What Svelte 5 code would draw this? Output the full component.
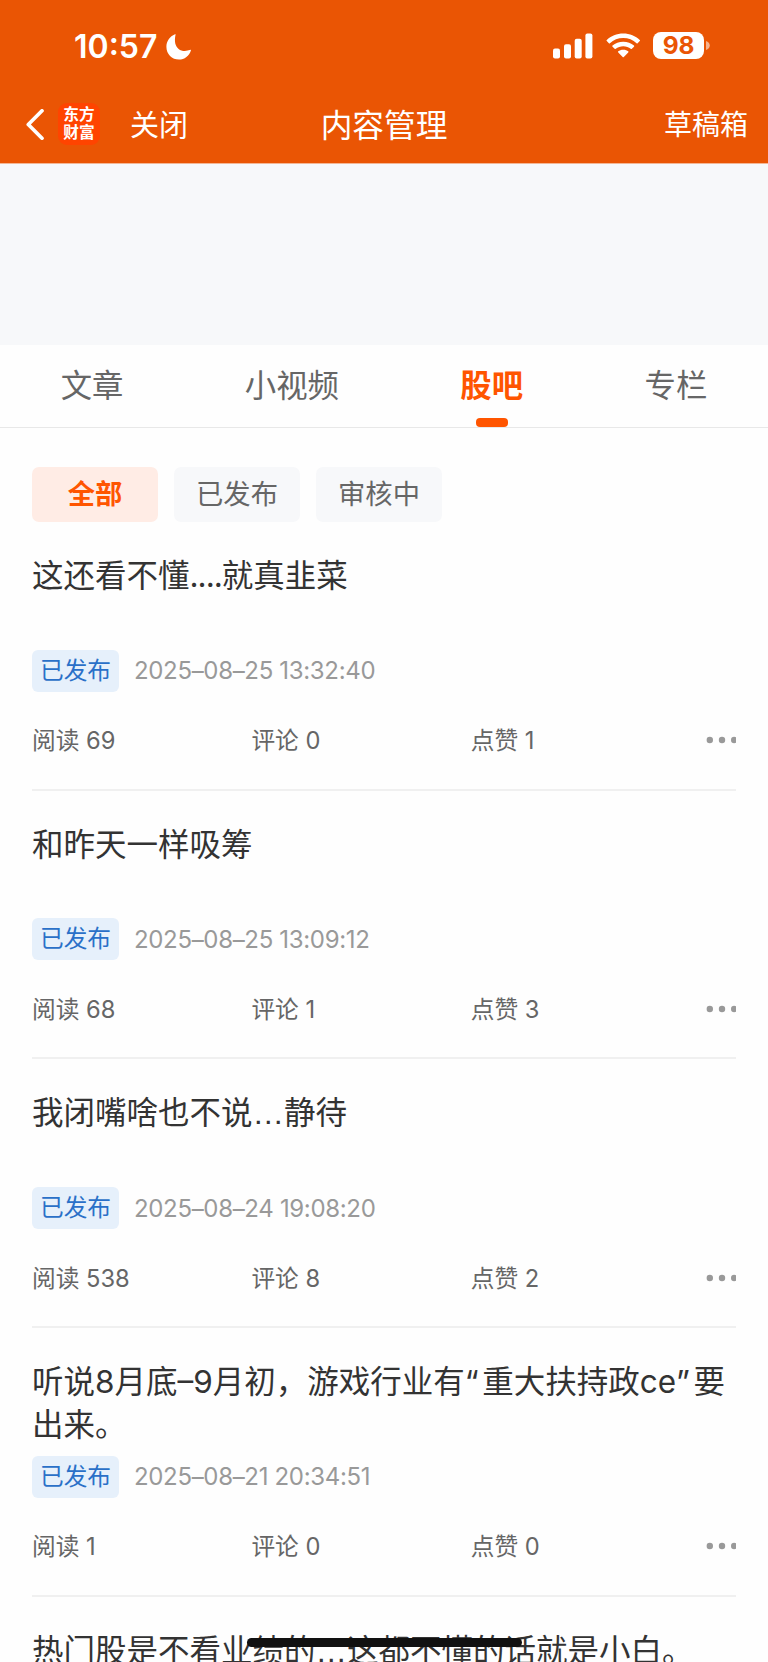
<script lang="ts">
  type Post = {
    title: string;
    time?: string;
    reads?: number;
    comments?: number;
    likes?: number;
  };

  const tabs = ['文章', '小视频', '股吧', '专栏'];
  const filters = ['全部', '已发布', '审核中'];

  const posts: Post[] = [
    { title: '这还看不懂....就真韭菜', time: '2025–08–25 13:32:40', reads: 69, comments: 0, likes: 1 },
    { title: '和昨天一样吸筹', time: '2025–08–25 13:09:12', reads: 68, comments: 1, likes: 3 },
    { title: '我闭嘴啥也不说…静待', time: '2025–08–24 19:08:20', reads: 538, comments: 8, likes: 2 },
    {
      title: '听说8月底–9月初，游戏行业有“重大扶持政ce”要出来。',
      time: '2025–08–21 20:34:51',
      reads: 1,
      comments: 0,
      likes: 0,
    },
    { title: '热门股是不看业绩的…这都不懂的话就是小白。' },
  ];

  let activeTab = $state('股吧');
  let activeFilter = $state('全部');

  // punctuation runs get their own spacing inside Chinese titles
  function splitTitle(title: string) {
    return title.split(/(“|”|…|\.{2,})/).filter(Boolean);
  }

  function partClass(part: string) {
    if (part === '…') return 'ellipsis';
    if (part === '“' || part === '”') return 'quote';
    if (part.startsWith('..')) return 'dots';
    return '';
  }
</script>

<div class="screen">
  <header class="header">
    <div class="status">
      <span class="status__time">10:57</span>
      <svg class="status__moon" viewBox="0 0 25 26" aria-hidden="true">
        <path d="M9.6.6C8 7.7 9.4 12.400 12.600 14.900C15.700 17.300 19.800 17.500 24.600 15.800C24.900 15.700 25 16 24.900 16.400C23.200 21.900 18.500 25.500 13 25.500C5.900 25.500.4 20 .4 12.900C.4 7.400 3.800 2.400 9 .3C9.400.1 9.700.2 9.600.6Z" />
      </svg>
      <span class="status__icons">
        <svg class="status__signal" viewBox="0 0 40 26" aria-hidden="true">
          <rect x="0" y="15.500" width="7" height="10" rx="2" />
          <rect x="11" y="11.300" width="7" height="14.200" rx="2" />
          <rect x="21.700" y="5.700" width="7" height="19.800" rx="2" />
          <rect x="32.400" y=".6" width="7" height="24.900" rx="2" />
        </svg>
        <svg class="status__wifi" viewBox="0 0 36 26" aria-hidden="true">
          <path d="M18 .4C24.800.4 30.900 2.900 35.200 7.200Q35.800 7.800 35.200 8.400L33 10.600Q32.500 11.100 31.900 10.600C28.200 7.100 23.300 5.200 18 5.200S7.800 7.100 4.100 10.600Q3.500 11.100 3 10.600L.8 8.400Q.2 7.800.8 7.200C5.100 2.900 11.200.4 18 .4Z" />
          <path d="M18 9C22.400 9 26.200 10.500 29.200 13.100Q29.800 13.700 29.200 14.300L27 16.500Q26.500 17 25.800 16.500C23.700 14.700 21 13.700 18 13.700S12.300 14.700 10.200 16.500Q9.500 17 9 16.500L6.800 14.300Q6.200 13.700 6.800 13.100C9.800 10.500 13.600 9 18 9Z" />
          <path d="M18 17.400C20.200 17.400 21.900 18 23.200 19.100Q23.800 19.700 23.200 20.300L18.600 24.900Q18 25.500 17.400 24.900L12.800 20.300Q12.200 19.700 12.800 19.100C14.100 18 15.800 17.400 18 17.400Z" />
        </svg>
        <span class="battery">98</span>
        <svg class="battery-cap" viewBox="0 0 4 9" aria-hidden="true">
          <path d="M0 0C2.300.8 3.800 2.500 3.800 4.500S2.300 8.200 0 9Z" />
        </svg>
      </span>
    </div>
    <nav class="nav">
      <div class="nav__left">
        <svg class="nav__back" viewBox="0 0 18 31" aria-hidden="true">
          <path d="M16 1.800 2.300 15.500 16 29.200" />
        </svg>
        <span class="logo">东方<br />财富</span>
        <span class="nav__close">关闭</span>
      </div>
      <span class="nav__title">内容管理</span>
      <span class="nav__drafts">草稿箱</span>
    </nav>
  </header>

  <div class="banner"></div>

  <div class="tabs" role="tablist">
    {#each tabs as tab}
      <button
        type="button"
        role="tab"
        class={['tab', tab === activeTab ? 'is-active' : ''].join(' ')}
        aria-selected={tab === activeTab}
        onclick={() => (activeTab = tab)}
      >
        {tab}
      </button>
    {/each}
  </div>

  <div class="filters">
    {#each filters as filter}
      <button
        type="button"
        class={['filter', filter === activeFilter ? 'is-active' : ''].join(' ')}
        onclick={() => (activeFilter = filter)}
      >
        {filter}
      </button>
    {/each}
  </div>

  <main class="posts">
    {#each posts as post}
      <article class="post">
        <h2 class="post__title">
          {#each splitTitle(post.title) as part}<span class={partClass(part)}>{part}</span>{/each}
        </h2>
        {#if post.time}
          <div class="post__meta">
            <span class="post__tag">已发布</span>
            <time class="post__time">{post.time}</time>
          </div>
          <div class="post__stats">
            <span>阅读 {post.reads}</span>
            <span>评论 {post.comments}</span>
            <span>点赞 {post.likes}</span>
            <svg class="post__more" viewBox="0 0 30 8" aria-hidden="true">
              <circle cx="3.800" cy="4" r="3.200" />
              <circle cx="16" cy="4" r="3.200" />
              <circle cx="28.200" cy="4" r="3.200" />
            </svg>
          </div>
        {/if}
      </article>
    {/each}
  </main>

  <div class="home-indicator"></div>
</div>

<style>
  :global(body) {
    margin: 0;
    background: #fefefe;
  }

  .screen {
    position: relative;
    width: 768px;
    height: 1662px;
    overflow: hidden;
    background: #fefefe;
    font-family: Inter, 'Noto Sans CJK SC', sans-serif;
    color: #333;
  }

  button {
    padding: 0;
    border: 0;
    background: none;
    font: inherit;
    cursor: pointer;
  }

  .header {
    box-sizing: border-box;
    height: 164px;
    border-bottom: 1px solid #f3b796;
    background: #ea5504;
    color: #fff;
  }

  .status {
    display: flex;
    align-items: center;
    height: 85px;
    padding: 8px 58px 0 74px;
    box-sizing: border-box;
  }

  .status__time {
    width: 83px;
    font-size: 32px;
    font-weight: 600;
    letter-spacing: 0;
    white-space: nowrap;
  }

  .status__moon {
    width: 25px;
    height: 26px;
    margin-left: 9px;
    fill: #fff;
  }

  .status__icons {
    display: flex;
    align-items: center;
    margin-left: auto;
    margin-top: -2px;
    fill: #fff;
  }

  .status__signal {
    width: 40px;
    height: 26px;
    margin-right: 12.500px;
  }

  .status__wifi {
    width: 34.500px;
    height: 25px;
    margin-right: 13px;
  }

  .battery {
    width: 51px;
    height: 27px;
    border-radius: 8px;
    background: #fff;
    color: #ea5504;
    font-size: 24.500px;
    font-weight: 700;
    line-height: 27px;
    letter-spacing: -0.3px;
    text-align: center;
  }

  .battery-cap {
    width: 4px;
    height: 9px;
    margin-left: 2px;
    opacity: 0.55;
  }

  .nav {
    display: grid;
    grid-template-columns: 1fr auto 1fr;
    align-items: center;
    height: 78px;
    padding: 0 20px 0 26px;
  }

  .nav__left {
    display: flex;
    align-items: center;
  }

  .nav__back {
    width: 18px;
    height: 31px;
    fill: none;
    stroke: #fff;
    stroke-width: 3.700;
    stroke-linecap: round;
    stroke-linejoin: round;
  }

  .logo {
    box-sizing: border-box;
    width: 42px;
    height: 42px;
    margin-left: 14px;
    padding-top: 2px;
    border-radius: 9px;
    background: #ff4400;
    font-family: 'Noto Sans CJK SC', sans-serif;
    font-size: 15.700px;
    font-weight: 700;
    line-height: 18px;
    text-align: center;
  }

  .nav__close {
    margin-left: 30px;
    padding-bottom: 3px;
    font-size: 29px;
  }

  .nav__title {
    margin-right: 6px;
    padding-bottom: 3px;
    font-size: 31.700px;
  }

  .nav__drafts {
    justify-self: end;
    padding-bottom: 2px;
    font-size: 28px;
  }

  .banner {
    height: 181px;
    background: #f7f8fa;
  }

  .tabs {
    display: flex;
    justify-content: space-around;
    height: 82px;
    border-bottom: 1px solid #e8e8e8;
  }

  .tab {
    position: relative;
    padding-top: 1px;
    color: #666;
    font-size: 31.400px;
    line-height: 81px;
  }

  .tab.is-active {
    color: #ff5500;
    font-weight: 700;
  }

  .tab.is-active::after {
    content: '';
    position: absolute;
    bottom: 0;
    left: 50%;
    width: 32px;
    height: 9px;
    margin-left: -16px;
    border-radius: 4px;
    background: #ff5500;
  }

  .filters {
    display: flex;
    gap: 16px;
    padding: 39px 32px 0;
  }

  .filter {
    width: 126px;
    height: 55px;
    border-radius: 7px;
    background: #f7f8fa;
    color: #666;
    font-size: 27.300px;
    line-height: 55px;
  }

  .filter.is-active {
    background: #ffece5;
    color: #ff5500;
    font-weight: 700;
  }

  .posts {
    padding: 0 32px;
  }

  .post {
    padding-top: 32px;
    border-bottom: 2px solid #f0f0f0;
  }

  .post__title {
    height: 86.700px;
    margin: 0;
    font-size: 31.500px;
    font-weight: 400;
    line-height: 43.300px;
  }

  .ellipsis {
    font-family: 'Liberation Sans', sans-serif;
    line-height: 1;
  }

  .dots {
    letter-spacing: -1px;
  }

  .quote {
    letter-spacing: 3.500px;
  }

  .post__meta {
    display: flex;
    align-items: center;
    gap: 15px;
    margin-top: 9px;
  }

  .post__tag {
    width: 87px;
    height: 42px;
    border-radius: 6px;
    background: #e6f0fb;
    color: #2a70c8;
    font-size: 23.700px;
    line-height: 42px;
    text-align: center;
  }

  .post__time {
    color: #999;
    font-size: 24px;
    letter-spacing: -0.33px;
  }

  .post__stats {
    display: grid;
    grid-template-columns: 219.400px 219.400px 1fr auto;
    align-items: center;
    height: 97px;
    color: #666;
    font-size: 23.700px;
  }

  .post__stats span {
    padding-bottom: 2px;
  }

  .post__more {
    width: 30px;
    height: 8px;
    fill: #999;
  }

  .home-indicator {
    position: absolute;
    bottom: 15px;
    left: 247px;
    width: 275px;
    height: 9px;
    border-radius: 5px;
    background: #111;
  }
</style>
